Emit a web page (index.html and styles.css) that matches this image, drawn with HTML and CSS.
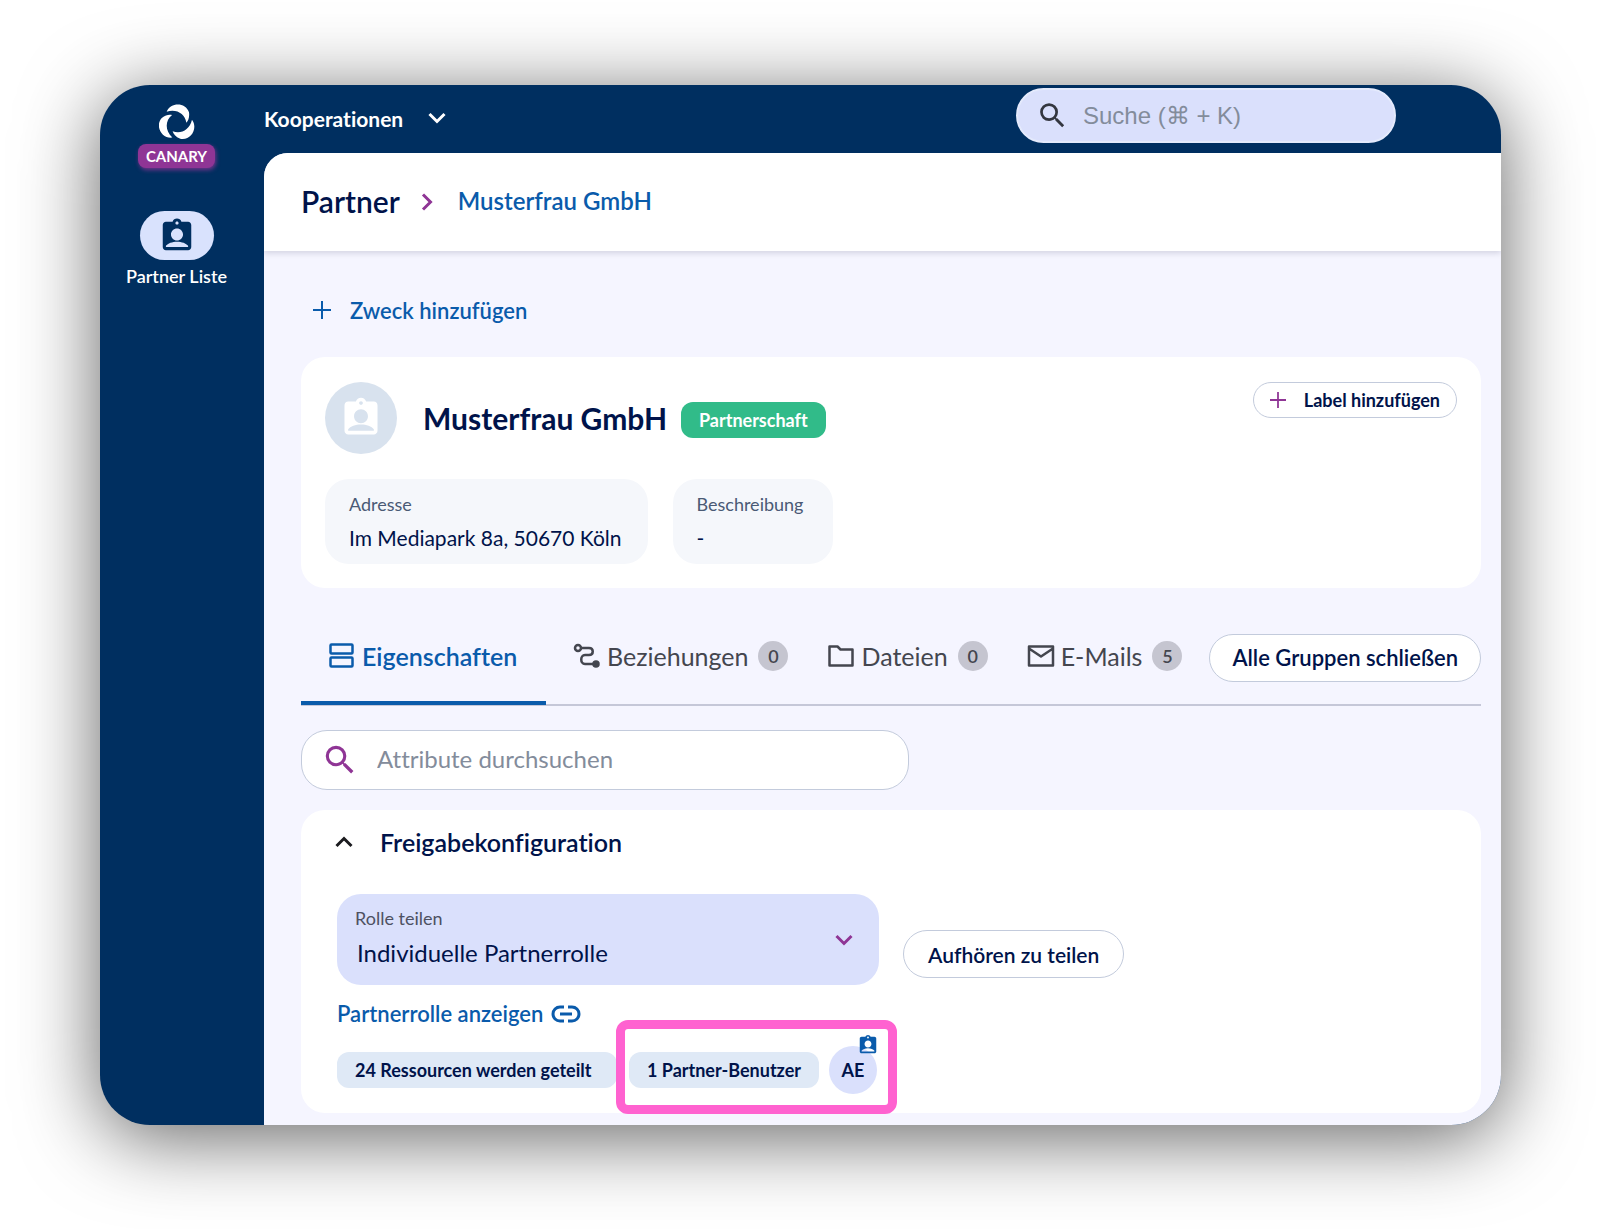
FILE: index.html
```html
<!DOCTYPE html>
<html lang="de">
<head>
  <meta charset="utf-8">
  <meta name="viewport" content="width=device-width, initial-scale=1">
  <title>Musterfrau GmbH - Partner</title>
  <link rel="stylesheet" href="styles.css">
</head>

<body>
  <!-- shared icons -->
  <svg class="sprite" aria-hidden="true">
    <symbol id="badge" viewBox="0 0 24 24">
      <path d="M19 3h-4.200C14.400 1.800 13.300 1 12 1s-2.400.800-2.800 2H5c-1.100 0-2 .9-2 2v14c0 1.100.9 2 2 2h14c1.100 0 2-.9 2-2V5c0-1.100-.9-2-2-2zm-7-.2c.6 0 1 .4 1 1s-.4 1-1 1-1-.4-1-1 .4-1 1-1zM12 7.200c2.100 0 3.800 1.700 3.800 3.800s-1.700 3.800-3.800 3.800-3.800-1.700-3.800-3.800S9.900 7.200 12 7.200zM19 19H5v-.8c1.200-1.600 4-2.600 7-2.600s5.800 1 7 2.600z" fill-rule="evenodd"/>
    </symbol>
    <symbol id="search" viewBox="0 0 24 24">
      <path d="M15.500 14h-.79l-.28-.27A6.471 6.471 0 0 0 16 9.500 6.500 6.500 0 1 0 9.500 16c1.610 0 3.090-.59 4.230-1.570l.27.28v.79l5 4.990L20.490 19l-4.990-5zm-6 0C7.010 14 5 11.990 5 9.500S7.010 5 9.500 5 14 7.010 14 9.500 11.990 14 9.500 14z"/>
    </symbol>
    <symbol id="chevron" viewBox="0 0 18 12">
      <path d="M1.500 2 9 9.500 16.500 2" fill="none" stroke="currentColor" stroke-width="3"/>
    </symbol>
    <symbol id="plus" viewBox="0 0 18 18">
      <path d="M9 0v18M0 9h18" fill="none" stroke="currentColor" stroke-width="2"/>
    </symbol>
  </svg>

  <div class="window">
    <aside class="sidebar">
      <svg class="logo" viewBox="0 0 108 108">
        <path d="M23 23C35-6 80-6 90 25c2 15-2 25-8 31C78 30 54 14 23 23z"/>
        <path d="M23 23C35-6 80-6 90 25c2 15-2 25-8 31C78 30 54 14 23 23z" transform="rotate(120 54 57)"/>
        <path d="M23 23C35-6 80-6 90 25c2 15-2 25-8 31C78 30 54 14 23 23z" transform="rotate(240 54 57)"/>
      </svg>
      <span class="canary">CANARY</span>
      <a class="nav-item" href="#">
        <span class="nav-pill"><svg><use href="#badge"/></svg></span>
        Partner Liste
      </a>
    </aside>

    <div class="page">
      <header class="topbar">
        <button class="workspace">Kooperationen <svg><use href="#chevron"/></svg></button>
        <label class="global-search">
          <svg><use href="#search"/></svg>
          <input type="text" placeholder="Suche (⌘ + K)" aria-label="Suche">
        </label>
      </header>

      <main>
        <nav class="breadcrumb">
          <h1>Partner</h1>
          <svg><use href="#chevron"/></svg>
          <a href="#">Musterfrau GmbH</a>
        </nav>

        <div class="content">
          <button class="add-purpose"><svg><use href="#plus"/></svg>Zweck hinzufügen</button>

          <section class="card profile">
            <div class="profile-head">
              <span class="avatar"><svg><use href="#badge"/></svg></span>
              <h2>Musterfrau GmbH</h2>
              <span class="status">Partnerschaft</span>
              <button class="outline add-label"><svg><use href="#plus"/></svg>Label hinzufügen</button>
            </div>
            <dl class="facts">
              <div class="fact"><dt>Adresse</dt><dd>Im Mediapark 8a, 50670 Köln</dd></div>
              <div class="fact"><dt>Beschreibung</dt><dd>-</dd></div>
            </dl>
          </section>

          <div class="tabs">
            <button class="tab active">
              <svg viewBox="0 0 28 28"><rect x="2.500" y="2.500" width="22" height="9" rx="1"/><rect x="2.500" y="15.500" width="22" height="9" rx="1"/></svg>
              Eigenschaften
            </button>
            <button class="tab">
              <svg viewBox="0 0 28 28"><circle cx="5" cy="6" r="3"/><path d="M8 6h8c5 0 5 7 0 7h-4c-5 0-5 9 0 9h10"/><circle class="dot" cx="23" cy="22" r="2.500"/></svg>
              Beziehungen <span class="count">0</span>
            </button>
            <button class="tab">
              <svg viewBox="0 0 28 28"><path d="M2.500 4.500h8l3 3h12v16h-23z" stroke-linejoin="round"/></svg>
              Dateien <span class="count">0</span>
            </button>
            <button class="tab">
              <svg viewBox="0 0 28 28"><path d="M2 4.500h24v19H2zM2 6.500l12 8 12-8" stroke-linejoin="round"/></svg>
              E-Mails <span class="count">5</span>
            </button>
            <button class="outline close-groups">Alle Gruppen schließen</button>
          </div>

          <label class="attr-search">
            <svg><use href="#search"/></svg>
            <input type="text" placeholder="Attribute durchsuchen" aria-label="Attribute durchsuchen">
          </label>

          <section class="card sharing">
            <button class="sharing-title"><svg><use href="#chevron"/></svg>Freigabekonfiguration</button>
            <div class="role-row">
              <div class="role-field">
                <label for="role">Rolle teilen</label>
                <select id="role"><option>Individuelle Partnerrolle</option></select>
                <svg><use href="#chevron"/></svg>
              </div>
              <button class="outline stop">Aufhören zu teilen</button>
            </div>
            <a class="role-link" href="#">Partnerrolle anzeigen
              <svg viewBox="0 0 30 18"><path d="M13 2H9a7 7 0 0 0 0 14h4M17 2h4a7 7 0 0 1 0 14h-4M9 9h12"/></svg>
            </a>
            <div class="chips">
              <span class="chip">24 Ressourcen werden geteilt</span>
              <div class="highlight">
                <span class="chip">1 Partner-Benutzer</span>
                <span class="user">AE<svg><use href="#badge"/></svg></span>
              </div>
            </div>
          </section>
        </div>
      </main>
    </div>
  </div>
</body>
</html>
```

FILE: styles.css
```css
* {
  margin: 0;
  padding: 0;
  box-sizing: border-box;
}

body {
  min-height: 100vh;
  display: flex;
  padding: 85px 99px 104px 100px;
  background: #fff;
  color: #00134a;
  font-family: Lato, "Open Sans", sans-serif;
  font-size: 21px;
  font-variant-ligatures: none;
}

button, input, select {
  font: inherit;
  font-variant-ligatures: none;
  color: inherit;
  background: none;
  border: none;
}

button {
  display: flex;
  align-items: center;
  white-space: nowrap;
}

a {
  color: #0a5bab;
  text-decoration: none;
}

svg {
  fill: currentColor;
  flex-shrink: 0;
}

.sprite {
  position: absolute;
  width: 0;
  height: 0;
}

.window {
  flex: 1;
  display: flex;
  min-width: 0;
  border-radius: 50px;
  overflow: hidden;
  background: #002f60;
  box-shadow: 0 12px 80px rgba(0, 0, 0, 0.62);
}

/* sidebar */
.sidebar {
  width: 164px;
  flex-shrink: 0;
  display: flex;
  flex-direction: column;
  align-items: center;
  padding: 19px 11px 0 0;
  color: #fff;
}

.logo {
  width: 36px;
  height: 36px;
}

.canary {
  margin-top: 4px;
  padding: 0 8px;
  border-radius: 8px;
  background: #8f3595;
  box-shadow: 1px 2px 4px rgba(143, 53, 149, 0.8);
  font-size: 15px;
  font-weight: 700;
  line-height: 24px;
}

.nav-item {
  display: flex;
  flex-direction: column;
  align-items: center;
  gap: 4px;
  margin-top: 43px;
  color: #fff;
  font-size: 18px;
  font-weight: 600;
  line-height: 24px;
}

.nav-pill {
  display: flex;
  align-items: center;
  justify-content: center;
  width: 74px;
  height: 49px;
  border-radius: 25px;
  background: #d9e2fd;
  color: #002f60;
}

.nav-pill svg {
  width: 38px;
  height: 38px;
}

/* top bar */
.page {
  flex: 1;
  display: flex;
  flex-direction: column;
  min-width: 0;
}

.topbar {
  display: flex;
  align-items: flex-start;
  justify-content: space-between;
  height: 68px;
  padding: 3px 105px 0 0;
  color: #fff;
}

.workspace {
  gap: 25px;
  height: 60px;
  font-weight: 700;
}

.workspace svg {
  width: 18px;
  height: 12px;
}

.global-search {
  display: flex;
  align-items: center;
  gap: 14px;
  width: 380px;
  height: 55px;
  padding-left: 18px;
  border: 2px solid #e4eafc;
  border-radius: 28px;
  background: #dae0fc;
  color: #33363f;
}

.global-search svg {
  width: 33px;
  height: 33px;
}

.global-search input {
  flex: 1;
  min-width: 0;
  font-family: "Liberation Sans", sans-serif;
  font-size: 24px;
}

input::placeholder {
  color: #838c9b;
  opacity: 1;
}

main {
  flex: 1;
  border-radius: 24px 0 0 0;
  overflow: hidden;
  background: #f5f5ff;
}

.breadcrumb {
  display: flex;
  align-items: center;
  height: 98px;
  padding-left: 37px;
  background: #fff;
  box-shadow: 0 2px 6px rgba(0, 0, 50, 0.15);
}

.breadcrumb h1,
.breadcrumb a {
  padding-bottom: 3px;
  font-weight: 600;
}

.breadcrumb h1 {
  font-size: 30px;
}

.breadcrumb svg {
  width: 18px;
  height: 12px;
  margin: 0 22px 0 18px;
  color: #8f3595;
  transform: rotate(-90deg);
}

.breadcrumb a {
  font-size: 24px;
}

.content {
  padding: 35px 20px 12px 37px;
}

.add-purpose {
  gap: 19px;
  height: 48px;
  padding-left: 12px;
  color: #0a5bab;
  font-size: 22px;
  font-weight: 600;
}

.add-purpose svg {
  width: 18px;
  height: 18px;
}

.card {
  border-radius: 24px;
  background: #fff;
}

.outline {
  justify-content: center;
  height: 48px;
  border: 1px solid #c3cbdc;
  border-radius: 24px;
  background: #fff;
  font-weight: 600;
}

/* partner profile */
.profile {
  margin-top: 23px;
  padding: 25px 24px 24px;
}

.profile-head {
  display: flex;
  align-items: center;
}

.avatar {
  display: flex;
  align-items: center;
  justify-content: center;
  width: 72px;
  height: 72px;
  margin-right: 26px;
  border-radius: 50%;
  background: #d8e2ee;
  color: #fff;
}

.avatar svg {
  width: 44px;
  height: 44px;
}

.profile h2 {
  font-size: 30px;
  font-weight: 700;
}

.status {
  margin: 3px 0 0 14px;
  padding: 0 18px;
  border-radius: 12px;
  background: #31bb89;
  color: #fff;
  font-size: 18px;
  font-weight: 700;
  line-height: 36px;
}

.add-label {
  align-self: flex-start;
  gap: 18px;
  height: 36px;
  margin-left: auto;
  padding: 0 16px;
  font-size: 18px;
  font-weight: 700;
}

.add-label svg {
  width: 16px;
  height: 16px;
  color: #8f3595;
}

.facts {
  display: flex;
  gap: 25px;
  margin-top: 25px;
}

.fact {
  min-width: 160px;
  height: 85px;
  padding: 12px 26px 12px 24px;
  border-radius: 24px;
  background: #f5f7fb;
}

.fact dt {
  color: #4a5a75;
  font-size: 18px;
  line-height: 26px;
}

.fact dd {
  margin-top: 7px;
  line-height: 28px;
}

/* tabs */
.tabs {
  display: flex;
  align-items: center;
  height: 95px;
  margin-top: 23px;
  border-bottom: 2px solid #c5c7d8;
}

.tab {
  height: 95px;
  padding: 0 12px 3px 27px;
  color: #44464f;
  font-size: 25px;
}

.tab svg {
  width: 28px;
  height: 28px;
  margin-right: 6px;
  fill: none;
  stroke: currentColor;
  stroke-width: 2.5;
}

.tab .dot {
  fill: currentColor;
}

.tab.active {
  min-width: 245px;
  padding-top: 1px;
  padding-bottom: 0;
  border-bottom: 4px solid #0a5bab;
  color: #0a5bab;
  font-weight: 600;
}

.count {
  width: 30px;
  height: 30px;
  margin-left: 10px;
  border-radius: 50%;
  background: #c5c5d0;
  font-size: 18px;
  font-weight: 600;
  line-height: 30px;
}

.close-groups {
  margin-left: auto;
  padding: 0 22px;
  font-size: 22px;
}

.attr-search {
  display: flex;
  align-items: center;
  width: 608px;
  height: 60px;
  margin-top: 24px;
  padding-left: 19px;
  gap: 18px;
  border: 1px solid #c3cbdc;
  border-radius: 26px;
  background: #fff;
}

.attr-search svg {
  width: 38px;
  height: 38px;
  color: #8f3595;
}

.attr-search input {
  flex: 1;
  min-width: 0;
  padding-bottom: 3px;
  font-size: 24px;
}

/* sharing */
.sharing {
  margin-top: 20px;
  padding: 16px 36px 19px;
}

.sharing-title {
  gap: 27px;
  height: 32px;
  margin-left: -2px;
  font-size: 25px;
  font-weight: 600;
}

.sharing-title svg {
  width: 18px;
  height: 12px;
  color: #1b1b1f;
  transform: rotate(180deg);
}

.role-row {
  display: flex;
  gap: 24px;
  margin-top: 36px;
}

.role-field {
  position: relative;
  width: 542px;
  height: 91px;
  padding: 12px 18px;
  border-radius: 24px;
  background: #dae0fc;
}

.role-field label {
  display: block;
  color: #4d5162;
  font-size: 18px;
  line-height: 24px;
}

.role-field select {
  display: block;
  width: 100%;
  height: 44px;
  padding-left: 2px;
  appearance: none;
  font-size: 24px;
}

.role-field svg {
  position: absolute;
  right: 26px;
  top: 40px;
  width: 18px;
  height: 12px;
  color: #8f3595;
}

.stop {
  margin-top: 36px;
  padding: 0 24px;
}

.role-link {
  display: flex;
  align-items: center;
  gap: 8px;
  margin-top: 15px;
  font-size: 22px;
  font-weight: 600;
  line-height: 28px;
}

.role-link svg {
  width: 30px;
  height: 18px;
  fill: none;
  stroke: currentColor;
  stroke-width: 3;
}

.chips, .highlight {
  display: flex;
  align-items: center;
  gap: 12px;
}

.chips {
  margin-top: 18px;
}

.chip {
  padding: 0 18px;
  border-radius: 12px;
  background: #dfe9f6;
  font-size: 18px;
  font-weight: 700;
  line-height: 36px;
  white-space: nowrap;
}

.chips > .chip {
  min-width: 280px;
}

/* marks the partner users */
.highlight {
  position: relative;
  gap: 10px;
}

.highlight::after {
  content: "";
  position: absolute;
  top: -26px;
  right: -20px;
  bottom: -20px;
  left: -13px;
  border: 9px solid #ff62d0;
  border-radius: 12px;
}

.user {
  position: relative;
  width: 48px;
  height: 48px;
  border-radius: 50%;
  background: #dae0fc;
  font-size: 18px;
  font-weight: 700;
  line-height: 48px;
  text-align: center;
}

.user svg {
  position: absolute;
  top: -12px;
  right: -2px;
  width: 22px;
  height: 22px;
  color: #0a5bab;
}
```
